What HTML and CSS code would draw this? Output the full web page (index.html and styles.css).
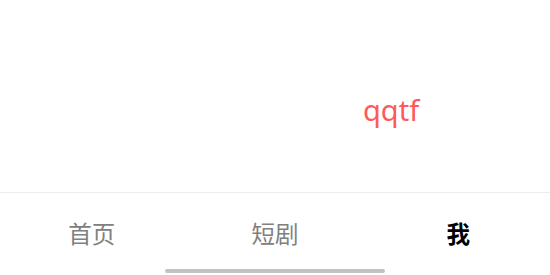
FILE: index.html
```html
<!DOCTYPE html>
<html lang="zh">
<head>
<meta charset="utf-8">
<link rel="stylesheet" href="styles.css">
</head>
<body>
<div class="screen">
  <main class="content">
    <span class="name">qqtf</span>
  </main>
  <nav class="tabbar">
    <div class="tab">首页</div>
    <div class="tab">短剧</div>
    <div class="tab active">我</div>
    <div class="home-indicator"></div>
  </nav>
</div>
</body>
</html>
```
FILE: styles.css
```css
html, body {
  margin: 0;
  padding: 0;
  background: #ffffff;
}
.screen {
  width: 550px;
  height: 275px;
  display: flex;
  flex-direction: column;
  font-family: "Noto Sans", "Noto Sans CJK SC", sans-serif;
  overflow: hidden;
}
.content {
  height: 193px;
  display: flex;
  align-items: center;
  padding-left: 363px;
  box-sizing: border-box;
  border-bottom: 1px solid #ececec;
}
.name {
  color: #ff5a5a;
  font-size: 29px;
  line-height: 1;
  margin-top: 26px;
}
.tabbar {
  position: relative;
  flex: 1;
  display: grid;
  grid-template-columns: 1fr 1fr 1fr;
  align-items: center;
}
.tab {
  text-align: center;
  font-family: "Noto Sans CJK SC", sans-serif;
  font-size: 23.5px;
  color: #808080;
  line-height: 1;
}
.tab.active {
  color: #000000;
  font-weight: bold;
}
.home-indicator {
  position: absolute;
  left: 165px;
  bottom: 2px;
  width: 220px;
  height: 4px;
  border-radius: 2px;
  background: #c2c2c2;
}
```
